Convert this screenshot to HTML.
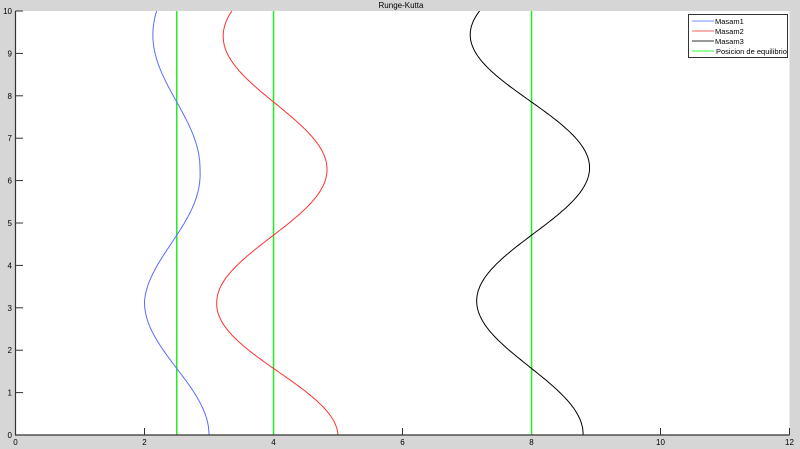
<!DOCTYPE html>
<html><head><meta charset="utf-8"><style>
html,body{margin:0;padding:0;background:#d6d6d6;}
svg{display:block;font-family:"Liberation Sans",sans-serif;}
</style></head><body>
<svg id="s" width="800" height="449" viewBox="0 0 800 449">
<rect x="0" y="0" width="800" height="449" fill="#d6d6d6"/>
<rect x="15.5" y="11" width="774" height="424" fill="#fff"/>
<text x="401" y="8" font-size="8" text-anchor="middle" fill="#000">Runge-Kutta</text>
<g id="ticks" stroke="#333" stroke-width="1"></g>
<g id="lbl" font-size="8" fill="#000"></g>
<rect x="176" y="11" width="1.5" height="424" fill="#22ee22"/>
<rect x="272.8" y="11" width="1.5" height="424" fill="#22ee22"/>
<rect x="530.8" y="11" width="1.5" height="424" fill="#22ee22"/>
<path id="b" fill="none" stroke="#5a6cff" stroke-width="1"/>
<path id="r" fill="none" stroke="#ff3030" stroke-width="1"/>
<path id="k" fill="none" stroke="#000" stroke-width="1"/>
<path d="M15.5 11V435H789.5" fill="none" stroke="#333" stroke-width="1.2"/>
<rect x="688.5" y="14.5" width="99" height="43" fill="#fff" stroke="#333"/>
<g stroke-width="1">
<line x1="692" y1="21" x2="714" y2="21" stroke="#7a8cff"/>
<line x1="692" y1="31" x2="714" y2="31" stroke="#ff6060"/>
<line x1="692" y1="41" x2="714" y2="41" stroke="#333"/>
<line x1="692" y1="51" x2="714" y2="51" stroke="#7f7" stroke-width="1.5"/>
</g>
<g font-size="7.5" fill="#000">
<text x="715" y="24">Masam1</text>
<text x="715" y="34">Masam2</text>
<text x="715" y="44">Masam3</text>
<text x="716" y="54">Posicion de equilibrio</text>
</g>
</svg>
<script>
var X=function(v){return 15.5+v*64.5},Y=function(v){return 435-v*42.4};
var t=document.getElementById('ticks'),l=document.getElementById('lbl'),ns='http://www.w3.org/2000/svg';
function el(p,n,a,tx){var e=document.createElementNS(ns,n);for(var k in a)e.setAttribute(k,a[k]);if(tx!=null)e.textContent=tx;p.appendChild(e);}
for(var i=0;i<=12;i+=2){var x=X(i);el(t,'line',{x1:x,y1:435,x2:x,y2:428});el(l,'text',{x:x,y:445,'text-anchor':'middle'},i);}
for(var j=0;j<=10;j++){var y=Y(j);el(t,'line',{x1:15.5,y1:y,x2:23,y2:y});el(l,'text',{x:12,y:y+3,'text-anchor':'end'},j);}
function path(id,c,a){var d='',P=Math.PI;for(var s=0;s<=400;s++){var v=s/40,u=v/P,k=Math.min(2,Math.floor(u)),f=u-k,A=a[k]+(a[k+1]-a[k])*f;var x=c+A*Math.cos(v);d+=(s?'L':'M')+X(x).toFixed(1)+' '+Y(v).toFixed(1);}document.getElementById(id).setAttribute('d',d);}
path('b',2.5,[0.5,0.5,0.36,0.37]);
path('r',4,[1,0.88,0.83,0.78]);
path('k',8,[0.8,0.85,0.9,0.95]);
</script>
</body></html>
